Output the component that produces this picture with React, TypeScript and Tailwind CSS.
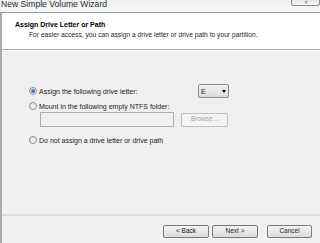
import React from "react";

function Radio({ checked }: { checked?: boolean }) {
  return (
    <span className="flex h-[8px] w-[8px] shrink-0 items-center justify-center rounded-full border border-[#8f8f8f] bg-gradient-to-br from-[#e0e0e0] to-[#fcfcfc]">
      {checked && (
        <span className="h-[4px] w-[4px] rounded-full bg-gradient-to-br from-[#5fa8e8] to-[#1a3f8f]" />
      )}
    </span>
  );
}

function WinButton({ label }: { label: string }) {
  return (
    <button className="flex h-[13px] w-full items-center justify-center rounded-[2px] border border-[#7a7a7a] bg-gradient-to-b from-[#f4f4f4] to-[#dcdcdc] text-[6.5px] leading-none text-[#1a1a1a]">
      {label}
    </button>
  );
}

export default function App() {
  return (
    <div className="flex h-[243px] w-[320px] flex-col overflow-hidden bg-[#f0f0f0] font-['Liberation_Sans',Arial,sans-serif] text-[#1c1c1c]">
      {/* title bar */}
      <div className="flex h-[13px] shrink-0 items-start justify-between border-b border-[#9a9a9a] bg-gradient-to-b from-[#eef0f2] to-[#f7f8f9]">
        <span className="pl-[1px] text-[8.6px] leading-[9px] text-[#2b2b2b]">New Simple Volume Wizard</span>
        <div className="flex h-[6px] w-[29px] items-end justify-center rounded-b-[3px] border border-t-0 border-[#8c8c8c] bg-gradient-to-b from-[#e8e8e8] to-[#fafafa]">
          <span className="text-[5px] leading-[5px] text-[#6a6a6a]">✕</span>
        </div>
      </div>

      <div className="flex flex-1 flex-col border-l-2 border-[#ababab]">
        {/* header */}
        <div className="flex h-[37px] shrink-0 flex-col border-b border-[#a8a8a8] bg-white pt-[8px]">
          <div className="pl-[13px] text-[7px] font-bold leading-[8px] text-black">Assign Drive Letter or Path</div>
          <div className="mt-[2px] pl-[27px] text-[6.7px] leading-[8px] text-[#1f1f1f]">
            For easier access, you can assign a drive letter or drive path to your partition.
          </div>
        </div>

        {/* body */}
        <div className="flex flex-1 flex-col border-t border-white pl-[27px]">
          <div className="mt-[33px] flex h-[14px] items-center">
            <Radio checked />
            <span className="ml-[2px] w-[159px] text-[7px] leading-none">Assign the following drive letter:</span>
            <div className="flex h-[14px] w-[31px] items-center justify-between rounded-[2px] border border-[#8a8a8a] bg-gradient-to-b from-[#f2f2f2] to-[#dadada] px-[2px]">
              <span className="text-[7px] leading-none">E</span>
              <span className="h-0 w-0 border-x-[2.5px] border-t-[3px] border-x-transparent border-t-black" />
            </div>
          </div>
          <div className="mt-[3px] flex h-[10px] items-center">
            <Radio />
            <span className="ml-[2px] text-[7px] leading-none">Mount in the following empty NTFS folder:</span>
          </div>
          <div className="mt-[1px] flex h-[15px] items-center">
            <div className="ml-[11px] h-[15px] w-[134px] border border-[#abadb3] bg-[#f0f0f0]" />
            <div className="ml-[7px] flex h-[14px] w-[47px] items-center justify-center rounded-[2px] border border-[#c0c0c0] bg-[#f4f4f4] text-[6.5px] leading-none text-[#a0a0a0]">
              Browse...
            </div>
          </div>
          <div className="mt-[8px] flex h-[10px] items-center">
            <Radio />
            <span className="ml-[2px] text-[7px] leading-none">Do not assign a drive letter or drive path</span>
          </div>
        </div>

        {/* footer */}
        <div className="flex h-[29px] shrink-0 flex-col border-t-2 border-[#dcdcdc]">
          <div className="mt-[9px] flex items-center pl-[161px]">
            <div className="w-[46px]"><WinButton label="< Back" /></div>
            <div className="ml-[3px] w-[46px]"><WinButton label="Next >" /></div>
            <div className="ml-[9px] w-[45px]"><WinButton label="Cancel" /></div>
          </div>
        </div>
      </div>
    </div>
  );
}
